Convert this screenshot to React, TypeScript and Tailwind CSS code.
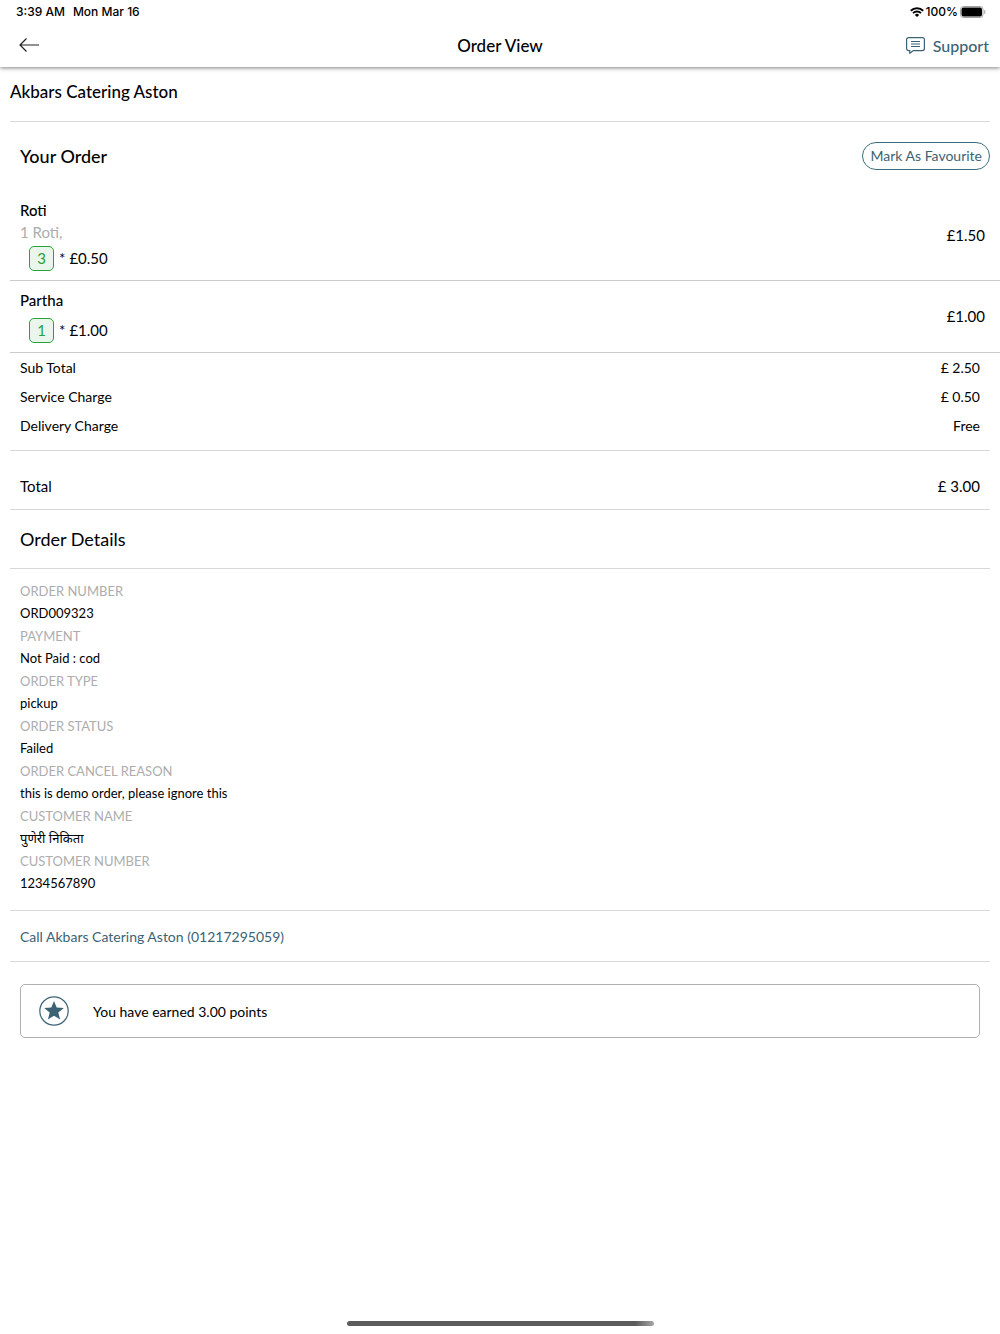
import { ReactNode } from "react"

interface OrderItem {
  name: string
  addOns?: string
  quantity: number
  price: string
  total: string
}

const items: OrderItem[] = [
  { name: "Roti", addOns: "1 Roti,", quantity: 3, price: "£0.50", total: "£1.50" },
  { name: "Partha", quantity: 1, price: "£1.00", total: "£1.00" },
]

const charges = [
  { label: "Sub Total", value: "£ 2.50" },
  { label: "Service Charge", value: "£ 0.50" },
  { label: "Delivery Charge", value: "Free" },
]

const details = [
  { label: "ORDER NUMBER", value: "ORD009323" },
  { label: "PAYMENT", value: "Not Paid : cod" },
  { label: "ORDER TYPE", value: "pickup" },
  { label: "ORDER STATUS", value: "Failed" },
  { label: "ORDER CANCEL REASON", value: "this is demo order, please ignore this" },
  { label: "CUSTOMER NAME", value: "पुणेरी निकिता" },
  { label: "CUSTOMER NUMBER", value: "1234567890" },
]

function StatusBar() {
  return (
    <div className="flex h-6 items-center justify-between pl-4 pr-[14px] font-['Inter',sans-serif] text-[12px] font-medium">
      <div className="flex gap-2">
        <span>3:39 AM</span>
        <span>Mon Mar 16</span>
      </div>
      <div className="flex items-center gap-[2px]">
        <svg width="14" height="10" viewBox="0 0 14 10">
          <path d="M.8 3.800a8.800 8.800 0 0 1 12.400 0" fill="none" stroke="#000" strokeWidth="2" />
          <path d="M3 6.200a5.600 5.600 0 0 1 8 0" fill="none" stroke="#000" strokeWidth="1.800" />
          <path d="M7 10 4.900 7.900a3 3 0 0 1 4.200 0z" />
        </svg>
        <span>100%</span>
        <svg width="26" height="12" viewBox="0 0 26 12">
          <rect x="0.5" y="0.5" width="22.5" height="11" rx="3" fill="none" stroke="#a3a3a3" />
          <rect x="1.500" y="1.500" width="20.500" height="9" rx="2" />
          <path d="M24.200 4v4c.8-.3 1.300-1.100 1.300-2s-.5-1.700-1.300-2z" fill="#a3a3a3" />
        </svg>
      </div>
    </div>
  )
}

function Header() {
  return (
    <header className="bg-white shadow-[0_1px_4px_rgba(0,0,0,0.5)]">
      <StatusBar />
      <div className="grid h-[43px] grid-cols-3 items-center px-[11px]">
        <button type="button" aria-label="Back" className="w-9 pb-[2px] pl-2">
          <svg width="20" height="14" viewBox="0 0 20 14" fill="none" stroke="#222" strokeWidth="1.200">
            <path d="M20 7H1M7.500.5 1 7l6.500 6.500" />
          </svg>
        </button>
        <h1 className="text-center text-[17px] font-medium leading-5">Order View</h1>
        <button type="button" className="flex items-center gap-2 justify-self-end text-[16px] font-medium leading-5 text-[#3b6374]">
          <svg width="19" height="17" viewBox="0 0 19 17" fill="none" stroke="currentColor" strokeWidth="1.200" strokeLinejoin="round">
            <path d="M2.600.7h13.800a2 2 0 0 1 2 2v8.900a2 2 0 0 1-2 2H7.500l-3.700 2.700v-2.700H2.600a2 2 0 0 1-2-2V2.700a2 2 0 0 1 2-2z" />
            <path d="M5 4.500h9M5 7h9M5 9.500h9" />
          </svg>
          Support
        </button>
      </div>
    </header>
  )
}

function Section({ children, className }: { children: ReactNode; className: string }) {
  return <section className={`mx-[10px] border-b border-[#d8d8d8] px-[10px] ${className}`}>{children}</section>
}

function ItemRow({ item }: { item: OrderItem }) {
  return (
    <li className="ml-[10px] flex items-center justify-between border-b border-[#cbcbcb] pb-[9px] pl-[10px] pr-[15px] pt-[9px]">
      <div>
        <p className="text-[15px] font-medium leading-5">{item.name}</p>
        {item.addOns && <p className="text-[15px] leading-6 text-[#adadad]">{item.addOns}</p>}
        <div className={`flex items-center pl-[9px] text-[15px] ${item.addOns ? "mt-[2px]" : "mt-2"}`}>
          <span className="flex h-[25px] w-[25px] items-center justify-center rounded-[5px] border border-[#28a138] bg-[#eaf5eb] text-[#28a138]">
            {item.quantity}
          </span>
          <span className="ml-[5px]">*</span>
          <span className="ml-1">{item.price}</span>
        </div>
      </div>
      <span className="text-[15px]">{item.total}</span>
    </li>
  )
}

export default function App() {
  return (
    <div className="flex min-h-screen flex-col bg-white font-['Lato','Noto_Sans',sans-serif] text-black">
      <Header />

      <main className="grow">
        <div className="mx-[10px] border-b border-[#d8d8d8] pb-[19px] pt-[15px]">
          <h2 className="text-[17px] font-medium leading-5">Akbars Catering Aston</h2>
        </div>

        <div className="flex items-center justify-between pb-[21px] pl-5 pr-[10px] pt-5">
          <h3 className="text-[18px] font-medium leading-7">Your Order</h3>
          <button type="button" className="h-7 rounded-full border border-[#3b6f80] px-[7px] text-[14px] leading-5 text-[#3b6374]">
            Mark As Favourite
          </button>
        </div>

        <ul>
          {items.map((item) => (
            <ItemRow key={item.name} item={item} />
          ))}
        </ul>

        <Section className="pb-[10px]">
          {charges.map((charge) => (
            <div key={charge.label} className="flex h-[29px] items-center justify-between text-[14px]">
              <span>{charge.label}</span>
              <span>{charge.value}</span>
            </div>
          ))}
        </Section>

        <Section className="flex items-center justify-between pb-3 pt-6 text-[15px] leading-[22px]">
          <span>Total</span>
          <span>{"£ 3.00"}</span>
        </Section>

        <Section className="pb-[17px] pt-[17px]">
          <h3 className="text-[18px] leading-6">Order Details</h3>
        </Section>

        <Section className="pb-[15px] pt-[11px] text-[13px]">
          <dl>
            {details.map((detail) => (
              <div key={detail.label}>
                <dt className="h-[22px] leading-[22px] text-[#adadad]">{detail.label}</dt>
                <dd className="h-[23px] leading-[23px]">{detail.value}</dd>
              </div>
            ))}
          </dl>
        </Section>

        <Section className="pb-[14px] pt-4 text-[14px] leading-5">
          <a href="tel:01217295059" className="block text-[#3b6374]">
            Call Akbars Catering Aston (01217295059)
          </a>
        </Section>

        <div className="mx-5 mt-[22px] flex h-[54px] items-center gap-6 rounded-[5px] border border-[#b0b0b0] px-[18px]">
          <svg width="30" height="30" viewBox="0 0 30 30" fill="#3b6374">
            <circle cx="15" cy="15" r="14.200" fill="none" stroke="#3b6374" strokeWidth="1.200" />
            <path d="M15 5l2.700 6.600 7.100.500-5.500 4.500 1.800 7-6.100-3.900-6.100 3.900 1.800-7-5.500-4.500 7.100-.500z" />
          </svg>
          <p className="text-[14px]">You have earned 3.00 points</p>
        </div>
      </main>

      <div className="mx-auto mb-2 h-[5px] w-[307px] rounded-full bg-linear-to-r from-[#5c5c5c] from-94% to-[#a8a8a8]" />
    </div>
  )
}
